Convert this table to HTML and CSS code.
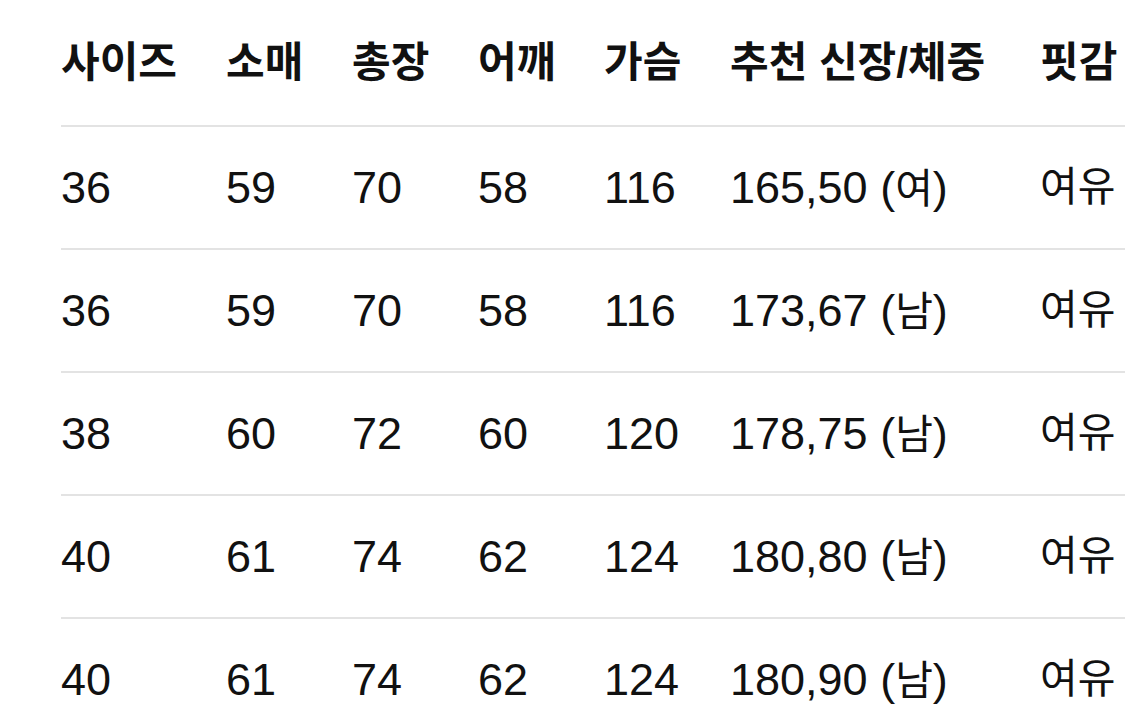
FILE: index.html
```html
<!DOCTYPE html>
<html lang="ko">
<head>
<meta charset="utf-8">
<link rel="stylesheet" href="styles.css">
</head>
<body>
<div class="size-table">
  <div class="row head">
    <div class="cell">사이즈</div><div class="cell">소매</div><div class="cell">총장</div><div class="cell">어깨</div><div class="cell">가슴</div><div class="cell">추천 신장/체중</div><div class="cell">핏감</div>
  </div>
  <div class="row">
    <div class="cell">36</div><div class="cell">59</div><div class="cell">70</div><div class="cell">58</div><div class="cell">116</div><div class="cell">165,50 (<span class="ko">여</span>)</div><div class="cell ko">여유</div>
  </div>
  <div class="row">
    <div class="cell">36</div><div class="cell">59</div><div class="cell">70</div><div class="cell">58</div><div class="cell">116</div><div class="cell">173,67 (<span class="ko">남</span>)</div><div class="cell ko">여유</div>
  </div>
  <div class="row">
    <div class="cell">38</div><div class="cell">60</div><div class="cell">72</div><div class="cell">60</div><div class="cell">120</div><div class="cell">178,75 (<span class="ko">남</span>)</div><div class="cell ko">여유</div>
  </div>
  <div class="row">
    <div class="cell">40</div><div class="cell">61</div><div class="cell">74</div><div class="cell">62</div><div class="cell">124</div><div class="cell">180,80 (<span class="ko">남</span>)</div><div class="cell ko">여유</div>
  </div>
  <div class="row">
    <div class="cell">40</div><div class="cell">61</div><div class="cell">74</div><div class="cell">62</div><div class="cell">124</div><div class="cell">180,90 (<span class="ko">남</span>)</div><div class="cell ko">여유</div>
  </div>
</div>
</body>
</html>
```
FILE: styles.css
```css
html, body {
  margin: 0;
  padding: 0;
  background: #ffffff;
  overflow: hidden;
}
body {
  width: 1125px;
  height: 726px;
  font-family: "Liberation Sans", "Noto Sans CJK KR", sans-serif;
  color: #111111;
}
.size-table {
  margin-left: 61px;
}
.row {
  display: grid;
  grid-template-columns: 165px 126px 126px 126px 126px 310px 1fr;
  height: 121px;
  align-items: center;
  border-top: 2px solid #e3e3e3;
  font-size: 45px;
  line-height: 1;
  white-space: nowrap;
}
.row.head {
  height: 125px;
  border-top: none;
  font-size: 42px;
  font-weight: 600;
}
.ko {
  font-size: 41px;
}
```
